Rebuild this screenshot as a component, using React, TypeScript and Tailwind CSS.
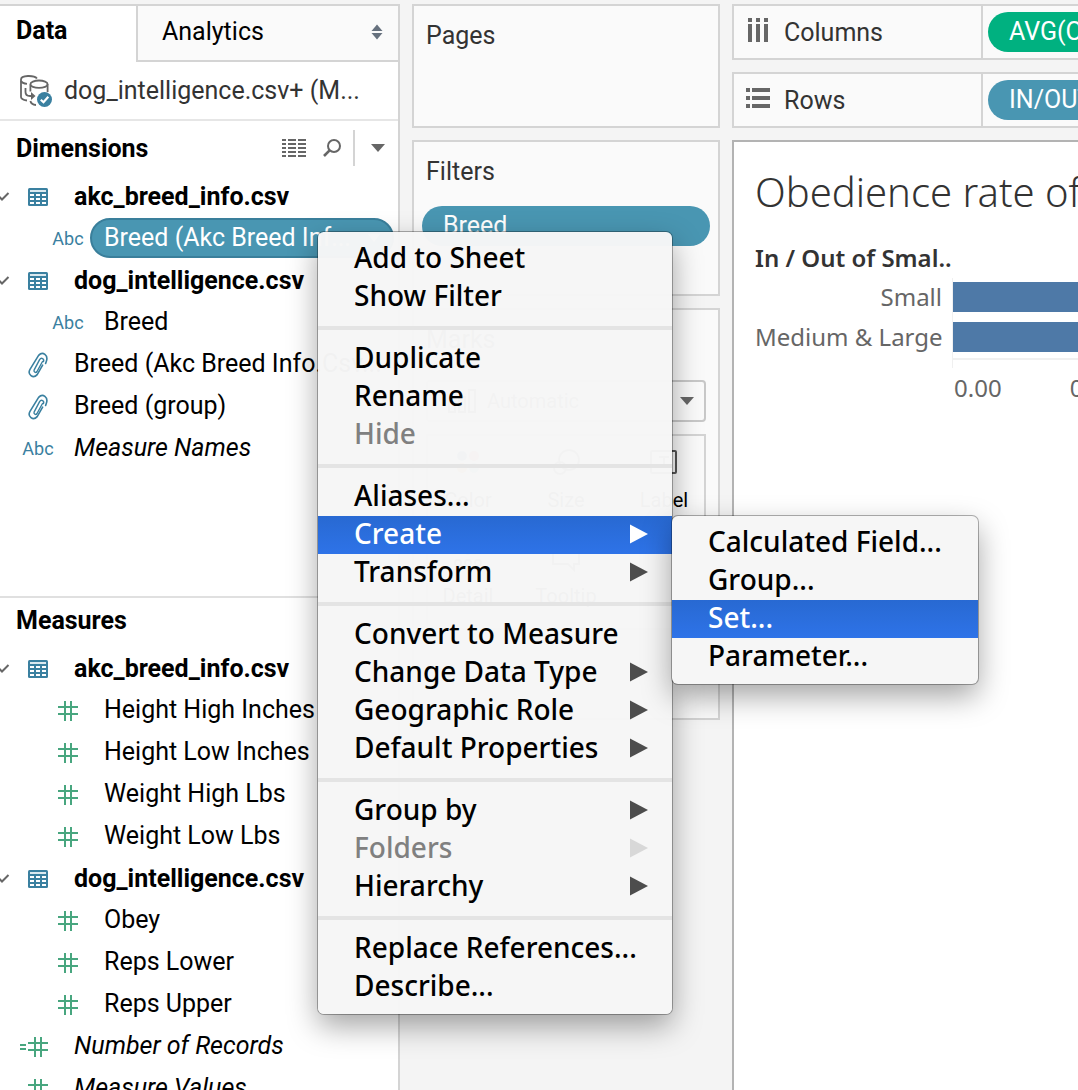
import React from "react";

type IconProps = { className?: string };

function Chevron() {
  return (
    <svg className="h-3 w-[10px] shrink-0" viewBox="0 0 10 12" fill="none" stroke="#666" strokeWidth="2" aria-hidden="true">
      <path d="M-4 3.5 L2 9.5 L8.5 3" />
    </svg>
  );
}

function TableIcon() {
  return (
    <svg className="h-[18px] w-[20px]" viewBox="0 0 20 18" fill="none" aria-hidden="true">
      <rect x="0" y="0" width="20" height="18" rx="1.5" fill="#3a80a0" />
      <g fill="#fff">
        <rect x="2" y="2" width="16" height="2" fill="#dbe9ef" />
        <rect x="2" y="6" width="4" height="2" />
        <rect x="8" y="6" width="4" height="2" />
        <rect x="14" y="6" width="4" height="2" />
        <rect x="2" y="10" width="4" height="2" />
        <rect x="8" y="10" width="4" height="2" />
        <rect x="14" y="10" width="4" height="2" />
        <rect x="2" y="14" width="4" height="2" />
        <rect x="8" y="14" width="4" height="2" />
        <rect x="14" y="14" width="4" height="2" />
      </g>
    </svg>
  );
}

function ClipIcon() {
  return (
    <svg className="h-[26px] w-[20px]" viewBox="0 0 20 26" fill="none" stroke="#3a80a0" strokeWidth="1.6" strokeLinecap="round" strokeLinejoin="round" aria-hidden="true">
      <path d="M14.5 9.5 L9 19.5 C7.8 21.3 5.2 20 6.2 17.9 L11.6 7.6 C13.3 4.9 16.6 6.8 15.4 9.6" strokeWidth="1.4" />
      <path d="M17.6 11.5 L18.3 9.5 C20.6 3.5 14.8 -1.2 10.6 3.4 L2 17.3 C-0.8 22.4 5 27.4 9.2 22.6 L14.6 13.2" />
    </svg>
  );
}

function HashIcon() {
  return (
    <svg className="h-[20px] w-[20px]" viewBox="0 0 20 20" fill="#48a67f" aria-hidden="true">
      <rect x="6" y="0" width="2" height="20" />
      <rect x="12" y="0" width="2" height="20" />
      <rect x="0" y="5" width="20" height="2" />
      <rect x="0" y="12" width="20" height="2" />
    </svg>
  );
}

function EqualsHashIcon() {
  return (
    <svg className="h-[20px] w-[36px]" viewBox="0 0 36 20" fill="#48a67f" aria-hidden="true">
      <rect x="0" y="7" width="6" height="2" />
      <rect x="0" y="11" width="6" height="2" />
      <rect x="14" y="0" width="2" height="20" />
      <rect x="20" y="0" width="2" height="20" />
      <rect x="8" y="5" width="20" height="2" />
      <rect x="8" y="12" width="20" height="2" />
    </svg>
  );
}

function AbcIcon() {
  return <span className="text-[18px] text-[#3a80a0]">Abc</span>;
}

function DatabaseIcon() {
  return (
    <svg className="h-[32px] w-[32px] shrink-0" viewBox="0 0 32 32" fill="none" stroke="#666" strokeWidth="1.8" aria-hidden="true">
      <path d="M17 3.5 C14 0 1 0 1 4.5 V22 C1 24 3.5 25 7 25.5" />
      <path d="M1 6 C2 8 4 8.5 7 8.8" />
      <ellipse cx="19" cy="9.2" rx="8.6" ry="3.7" />
      <path d="M27.6 9.2 V17" />
      <path d="M10.4 9.5 V16.5" />
      <path d="M5.5 13 V17 C5.5 20 7.5 21 10 21 H14" />
      <path d="M11 17 L15.5 21 L11 25 Z" fill="#666" stroke="none" />
      <path d="M10.4 26 C11 29 13 29.8 16 30" />
      <circle cx="24.5" cy="24.5" r="7.5" fill="#3a80a0" stroke="none" />
      <path d="M20.8 24.7 L23.5 27.2 L28.3 21.7" stroke="#fff" strokeWidth="2.2" />
    </svg>
  );
}

function SortIcon() {
  return (
    <svg className="h-[16px] w-[12px]" viewBox="0 0 12 16" fill="#66717e" aria-hidden="true">
      <path d="M6 0.5 L11.5 7 H0.5 Z" />
      <path d="M6 15.5 L11.5 9 H0.5 Z" />
    </svg>
  );
}

function GridListIcon() {
  return (
    <svg className="h-[18px] w-[24px]" viewBox="0 0 24 18" stroke="#666" strokeWidth="2" aria-hidden="true">
      {[1, 5, 9, 13, 17].map((y) => (
        <path key={y} d={`M0 ${y} H4 M6 ${y} H14 M16 ${y} H24`} />
      ))}
    </svg>
  );
}

function SearchIcon() {
  return (
    <svg className="h-[18px] w-[18px]" viewBox="0 0 18 18" fill="none" stroke="#666" strokeWidth="2" aria-hidden="true">
      <circle cx="11" cy="7" r="6" />
      <path d="M6.6 11.4 L1 17" strokeWidth="2.6" />
    </svg>
  );
}

function Caret({ className = "" }: IconProps) {
  return (
    <svg className={`h-[8px] w-[14px] ${className}`} viewBox="0 0 14 8" fill="#666" aria-hidden="true">
      <path d="M0 0 H14 L7 8 Z" />
    </svg>
  );
}

function ColumnsIcon() {
  return (
    <svg className="h-[24px] w-[20px]" viewBox="0 0 20 24" fill="#666" aria-hidden="true">
      {[0, 8, 16].map((x) => (
        <path key={x} d={`M${x} 0 h4 v4 h-4 Z M${x} 6 h4 v18 h-4 Z`} />
      ))}
    </svg>
  );
}

function RowsIcon() {
  return (
    <svg className="h-[20px] w-[24px]" viewBox="0 0 24 20" fill="#666" aria-hidden="true">
      {[0, 8, 16].map((y) => (
        <path key={y} d={`M0 ${y} h4 v4 h-4 Z M6 ${y} h18 v4 h-18 Z`} />
      ))}
    </svg>
  );
}

type Field = {
  name: string;
  kind: "table" | "abc" | "clip" | "hash" | "calc";
  nested?: boolean;
  selected?: boolean;
  italic?: boolean;
};

const dimensions: Field[] = [
  { name: "akc_breed_info.csv", kind: "table" },
  { name: "Breed (Akc Breed Inf...", kind: "abc", nested: true, selected: true },
  { name: "dog_intelligence.csv", kind: "table" },
  { name: "Breed", kind: "abc", nested: true },
  { name: "Breed (Akc Breed Info.Csv...", kind: "clip" },
  { name: "Breed (group)", kind: "clip" },
  { name: "Measure Names", kind: "abc", italic: true },
];

const measures: Field[] = [
  { name: "akc_breed_info.csv", kind: "table" },
  { name: "Height High Inches", kind: "hash", nested: true },
  { name: "Height Low Inches", kind: "hash", nested: true },
  { name: "Weight High Lbs", kind: "hash", nested: true },
  { name: "Weight Low Lbs", kind: "hash", nested: true },
  { name: "dog_intelligence.csv", kind: "table" },
  { name: "Obey", kind: "hash", nested: true },
  { name: "Reps Lower", kind: "hash", nested: true },
  { name: "Reps Upper", kind: "hash", nested: true },
  { name: "Number of Records", kind: "calc", italic: true },
  { name: "Measure Values", kind: "hash", italic: true },
];

function FieldIcon({ kind }: { kind: Field["kind"] }) {
  if (kind === "table") return <TableIcon />;
  if (kind === "abc") return <AbcIcon />;
  if (kind === "clip") return <ClipIcon />;
  if (kind === "calc") return <EqualsHashIcon />;
  return <HashIcon />;
}

function FieldRow({ field }: { field: Field }) {
  const group = field.kind === "table";
  return (
    <li className="flex h-[42px] items-center">
      <span className={`flex shrink-0 items-center ${field.nested ? "w-12" : "w-[18px]"}`}>{group && <Chevron />}</span>
      <span className="flex w-10 shrink-0 items-center justify-center pt-[2px]">
        <FieldIcon kind={field.kind} />
      </span>
      {field.selected ? (
        <button type="button" className="ml-[2px] mr-1 flex h-10 flex-1 items-center justify-between whitespace-nowrap rounded-full border-2 border-[#3a7f9b] bg-[#4996b2] px-3 text-white">
          {field.name}
          <svg className="h-2 w-3" viewBox="0 0 12 8" fill="#fff" aria-hidden="true">
            <path d="M0 0 H12 L6 8 Z" />
          </svg>
        </button>
      ) : (
        <button type="button" className={`ml-4 whitespace-nowrap ${group ? "pt-[2px] font-bold" : ""} ${field.italic ? "italic" : ""}`}>
          {field.name}
        </button>
      )}
    </li>
  );
}

type Item = { label: string; sub?: boolean; disabled?: boolean; active?: boolean };

const menuGroups: Item[][] = [
  [{ label: "Add to Sheet" }, { label: "Show Filter" }],
  [{ label: "Duplicate" }, { label: "Rename" }, { label: "Hide", disabled: true }],
  [{ label: "Aliases..." }, { label: "Create", sub: true, active: true }, { label: "Transform", sub: true }],
  [
    { label: "Convert to Measure" },
    { label: "Change Data Type", sub: true },
    { label: "Geographic Role", sub: true },
    { label: "Default Properties", sub: true },
  ],
  [{ label: "Group by", sub: true }, { label: "Folders", sub: true, disabled: true }, { label: "Hierarchy", sub: true }],
  [{ label: "Replace References..." }, { label: "Describe..." }],
];

const createItems: Item[] = [
  { label: "Calculated Field..." },
  { label: "Group..." },
  { label: "Set...", active: true },
  { label: "Parameter..." },
];

function MenuItem({ item }: { item: Item }) {
  const tone = item.active
    ? "bg-linear-to-b from-[#2869d2] to-[#2e73e8] text-white"
    : item.disabled
      ? "text-[#808080]"
      : "text-black";
  const arrow = item.active ? "#ffffff" : item.disabled ? "#d8d8d8" : "#4d4d4d";
  return (
    <button type="button" role="menuitem" disabled={item.disabled} className={`flex h-[38px] w-full items-center justify-between whitespace-nowrap pb-[2px] pl-9 pr-6 font-medium ${tone}`}>
      <span className="pb-[2px]">{item.label}</span>
      {item.sub && (
        <svg className="h-5 w-[18px]" viewBox="0 0 18 20" fill={arrow} aria-hidden="true">
          <path d="M0 0.5 L18 10 L0 19.5 Z" />
        </svg>
      )}
    </button>
  );
}

function ContextMenu() {
  return (
    <div role="menu" className="absolute left-[318px] top-[232px] w-[354px] rounded-md bg-[#f6f6f6]/98 py-2 font-['Noto_Sans',sans-serif] text-[28px] leading-[38px] shadow-[0_0_0_1px_rgba(0,0,0,0.3),0_12px_30px_rgba(0,0,0,0.36)]">
      {menuGroups.map((group, i) => (
        <div key={i} role="group">
          {i > 0 && <hr className="my-[10px] h-1 border-0 bg-[#e4e4e4]" />}
          {group.map((item) => (
            <MenuItem key={item.label} item={item} />
          ))}
        </div>
      ))}
      <div role="menu" aria-label="Create" className="absolute left-full top-[284px] w-[306px] rounded-md bg-[#f6f6f6] py-2 shadow-[0_0_0_1px_rgba(0,0,0,0.3),0_12px_30px_rgba(0,0,0,0.36)]">
        {createItems.map((item) => (
          <MenuItem key={item.label} item={item} />
        ))}
      </div>
    </div>
  );
}

function DataPane() {
  return (
    <aside className="flex w-[400px] shrink-0 flex-col border-r-2 border-t-2 border-[#d4d4d4] bg-white text-black">
      <div role="tablist" className="flex h-14">
        <button type="button" role="tab" aria-selected="true" className="w-[136px] pb-[6px] pl-4 text-left font-bold">
          Data
        </button>
        <button type="button" role="tab" aria-selected="false" className="flex flex-1 items-center justify-between border-b-2 border-l-2 border-[#d4d4d4] bg-[#fafafa] pb-[2px] pl-6 pr-[15px]">
          Analytics
          <SortIcon />
        </button>
      </div>
      <button type="button" className="flex h-[59px] items-center gap-3 whitespace-nowrap border-b-2 border-[#e6e6e6] pl-5 text-[#333]">
        <DatabaseIcon />
        dog_intelligence.csv+ (M...
      </button>
      <section className="h-[477px] border-b-2 border-[#e0e0e0]">
        <header className="flex h-[54px] items-center pl-4">
          <h2 className="flex-1 pt-[2px] font-bold">Dimensions</h2>
          <button type="button" aria-label="View data">
            <GridListIcon />
          </button>
          <button type="button" aria-label="Find field" className="ml-[17px]">
            <SearchIcon />
          </button>
          <span className="ml-3 h-9 w-[2px] bg-[#d4d4d4]" />
          <button type="button" aria-label="Dimension options" className="flex w-[43px] justify-center pl-[3px]">
            <Caret />
          </button>
        </header>
        <ul>
          {dimensions.map((f, i) => (
            <FieldRow key={i} field={f} />
          ))}
        </ul>
      </section>
      <section className="min-h-0 flex-1 overflow-hidden">
        <header className="flex h-[49px] items-center pb-1 pl-4">
          <h2 className="font-bold">Measures</h2>
        </header>
        <ul>
          {measures.map((f, i) => (
            <FieldRow key={i} field={f} />
          ))}
        </ul>
      </section>
    </aside>
  );
}

function MarkButton({ label, children }: { label: string; children: React.ReactNode }) {
  return (
    <button type="button" className="flex h-24 w-[98px] shrink-0 flex-col items-center gap-3 pt-3 text-[20px] leading-6 text-black">
      <svg className="h-7 w-7" viewBox="0 0 28 28" fill="none" stroke="#555" strokeWidth="2" aria-hidden="true">
        {children}
      </svg>
      {label}
    </button>
  );
}

function Cards() {
  return (
    <div className="flex w-[308px] shrink-0 flex-col gap-3 text-[#333]">
      <section className="h-[124px] border-2 border-[#d4d4d4] bg-[#fafafa] px-3 pt-3">
        <h2>Pages</h2>
      </section>
      <section className="h-[156px] border-2 border-[#d4d4d4] bg-[#fafafa] px-2 pt-3">
        <h2 className="px-1">Filters</h2>
        <button type="button" className="mt-4 flex h-10 w-full items-center rounded-full bg-[#4996b2] pl-[21px] text-white">
          Breed
        </button>
      </section>
      <section className="h-[412px] border-2 border-[#d4d4d4] bg-[#fafafa] px-3 pt-3">
        <h2>Marks</h2>
        <div className="relative mt-[22px]">
          <select aria-label="Mark type" className="h-[42px] w-full appearance-none rounded-sm border-2 border-[#c8c8c8] bg-[#fafafa] pl-[59px] text-[20px]">
            <option>Automatic</option>
          </select>
          <svg className="absolute left-[22px] top-[9px] h-6 w-7" viewBox="0 0 28 24" fill="none" stroke="#555" strokeWidth="2" aria-hidden="true">
            <path d="M1 13 h6 v10 h-6 Z M11 8 h6 v15 h-6 Z M21 1 h6 v22 h-6 Z" />
          </svg>
          <Caret className="absolute right-3 top-[17px]" />
        </div>
        <div className="mt-3 border-2 border-[#d4d4d4]">
          <div className="-mx-[9px] flex flex-wrap">
            <MarkButton label="Color">
              <g stroke="none">
                <circle cx="8" cy="8" r="5" fill="#4e79a7" />
                <circle cx="20" cy="8" r="5" fill="#e15759" />
                <circle cx="8" cy="20" r="5" fill="#f28e2b" />
                <circle cx="20" cy="20" r="5" fill="#76b7b2" />
              </g>
            </MarkButton>
            <MarkButton label="Size">
              <circle cx="17" cy="12" r="10" />
              <circle cx="8" cy="20" r="6" />
            </MarkButton>
            <MarkButton label="Label">
              <rect x="1" y="3" width="25" height="22" rx="1" />
              <path d="M9 9 H19 M14 9 V20" />
            </MarkButton>
            <MarkButton label="Detail">
              <circle cx="14" cy="6" r="4" />
              <circle cx="4" cy="19" r="3" />
              <circle cx="14" cy="19" r="3" />
              <circle cx="24" cy="19" r="3" />
            </MarkButton>
            <MarkButton label="Tooltip">
              <path d="M1 3 H27 V20 H22 V26 L16 20 H1 Z" />
            </MarkButton>
          </div>
        </div>
      </section>
    </div>
  );
}

function Shelf({ label, icon, children }: { label: string; icon: React.ReactNode; children: React.ReactNode }) {
  return (
    <section className="flex h-14 overflow-hidden border-2 border-r-0 border-[#d4d4d4] bg-[#fafafa]">
      <h2 className="flex w-[249px] shrink-0 items-center border-r-2 border-[#d4d4d4] pl-3 text-[#333]">
        <span className="flex w-6 justify-center pb-1">{icon}</span>
        <span className="pl-[14px] pt-[2px]">{label}</span>
      </h2>
      <div className="flex items-center pl-[5px]">{children}</div>
    </section>
  );
}

function Worksheet() {
  return (
    <main className="flex min-w-0 flex-1 flex-col gap-3">
      <Shelf label="Columns" icon={<ColumnsIcon />}>
        <button type="button" className="flex h-10 w-[288px] shrink-0 items-center whitespace-nowrap rounded-full bg-[#00b180] pl-[21px] text-white">
          AVG(Obey)
        </button>
      </Shelf>
      <Shelf label="Rows" icon={<RowsIcon />}>
        <button type="button" className="flex h-10 w-[288px] shrink-0 items-center whitespace-nowrap rounded-full bg-[#4996b2] pl-[21px] text-white">
          IN/OUT(Small Dogs)
        </button>
      </Shelf>
      <section className="flex-1 overflow-hidden border-l-2 border-t-2 border-[#b3b3b3] bg-white pl-[21px] font-['Noto_Sans',sans-serif] text-[24px] leading-10 text-[#666]">
        <h1 className="mt-[22px] whitespace-nowrap text-[40px] font-light leading-[56px] text-[#333]">Obedience rate of small breeds</h1>
        <p className="mt-[18px] whitespace-nowrap font-semibold leading-10 text-[#333]">In / Out of Smal..</p>
        <div className="flex">
          <div className="-mt-px flex w-[187px] shrink-0 flex-col whitespace-nowrap text-right">
            <span>Small</span>
            <span>Medium &amp; Large</span>
          </div>
          <div className="ml-[10px] flex-1 border-b-2 border-l border-[#f0f0f0]">
            <div className="flex h-[38px] items-center">
              <div className="h-[30px] w-full bg-[#4e79a7]" />
            </div>
            <div className="flex h-[42px] items-center">
              <div className="h-[30px] w-full bg-[#4e79a7]" />
            </div>
          </div>
        </div>
        <div className="ml-[197px] h-2 border-l border-[#f0f0f0]" />
        <div className="flex gap-[68px] pl-[199px]">
          <span>0.00</span>
          <span>0.05</span>
        </div>
      </section>
    </main>
  );
}

export default function App() {
  return (
    <div className="relative flex h-screen gap-3 overflow-hidden bg-[#f4f4f4] pt-1 font-[Roboto,sans-serif] text-[25px] leading-9">
      <DataPane />
      <Cards />
      <Worksheet />
      <ContextMenu />
    </div>
  );
}
